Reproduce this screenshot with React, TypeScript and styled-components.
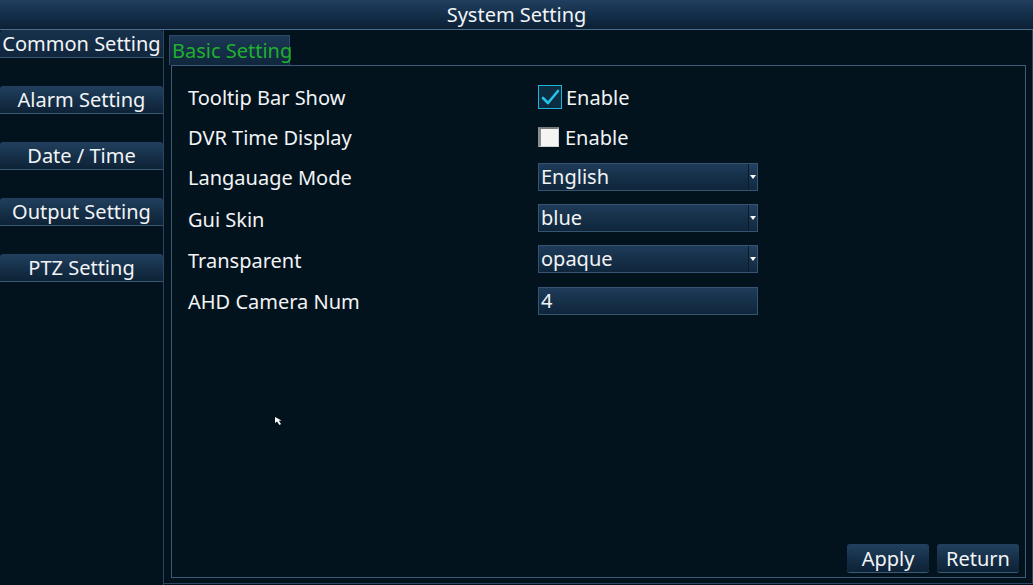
import React from "react";
import styled, { createGlobalStyle } from "styled-components";

const GlobalStyle = createGlobalStyle`
  html, body {
    margin: 0;
    padding: 0;
    background: #03131e;
  }
  body {
    font-family: "Noto Sans", "Open Sans", sans-serif;
    color: #f2f4f6;
  }
`;

const Screen = styled.div`
  position: relative;
  width: 1033px;
  height: 585px;
  display: flex;
  flex-direction: column;
  background: #03131e;
  overflow: hidden;
`;

const TitleBar = styled.div`
  height: 29px;
  border-bottom: 1px solid #4d6d8c;
  background: linear-gradient(#223f5f 0%, #15304c 45%, #0c2035 100%);
  display: flex;
  align-items: center;
  justify-content: center;
  font-size: 20px;
  line-height: 29px;
`;

const Body = styled.div`
  flex: 1;
  display: flex;
  min-height: 0;
`;

const Sidebar = styled.div`
  width: 163px;
  display: flex;
  flex-direction: column;
  gap: 28px;
  border-right: 1px solid #2b4760;
`;

const NavButton = styled.div<{ $active?: boolean }>`
  height: 27px;
  border-bottom: 1px solid #375773;
  background: ${p =>
    p.$active
      ? "linear-gradient(#17314c 0%, #10263d 100%)"
      : "linear-gradient(#21405f 0%, #163049 50%, #0d2236 100%)"};
  border-radius: 3px 3px 0 0;
  display: flex;
  align-items: center;
  justify-content: center;
  font-size: 20px;
  white-space: nowrap;
`;

const Main = styled.div`
  flex: 1;
  display: flex;
  flex-direction: column;
  padding: 5px 6px 5px 5px;
  border-right: 1px solid #2b4760;
  border-bottom: 1px solid #2b4760;
  margin-bottom: 1px;
`;

const TabRow = styled.div`
  display: flex;
  height: 30px;
`;

const Tab = styled.div`
  width: 121px;
  height: 30px;
  box-sizing: border-box;
  border: 1px solid #2d4a66;
  border-bottom: none;
  background: linear-gradient(#1c3855 0%, #0f263c 100%);
  color: #1fb02c;
  font-size: 20px;
  line-height: 30px;
  padding-left: 2px;
  white-space: nowrap;
`;

const Panel = styled.div`
  flex: 1;
  margin-left: 2px;
  border: 1px solid #3c5b78;
  display: flex;
  flex-direction: column;
  padding: 18px 0 4px 16px;
`;

const Rows = styled.div`
  display: flex;
  flex-direction: column;
`;

const Row = styled.div<{ $h: number; $field?: boolean }>`
  display: flex;
  align-items: ${p => (p.$field ? "flex-end" : "center")};
  height: ${p => p.$h}px;
`;

const Label = styled.div<{ $field?: boolean }>`
  width: 350px;
  font-size: 20px;
  white-space: nowrap;
  ${p => (p.$field ? "align-self: center; margin-top: 15px;" : "")}
`;

const CheckWrap = styled.div`
  display: flex;
  align-items: center;
  gap: 4px;
  font-size: 20px;
`;

const CheckOn = styled.div`
  width: 22px;
  height: 22px;
  border: 1px solid #1fb5d8;
  background: #0c2c42;
  display: flex;
  align-items: center;
  justify-content: center;
`;

const CheckOff = styled.div`
  width: 17px;
  height: 17px;
  margin-right: 2px;
  background: #f4f4f2;
  border-top: 2px solid #7a7a7a;
  border-left: 3px solid #8c8c8c;
  border-right: 1px solid #cfcfcf;
  border-bottom: 1px solid #cfcfcf;
`;

const Field = styled.div`
  position: relative;
  width: 220px;
  height: 28px;
  box-sizing: border-box;
  border: 1px solid #34546f;
  background: linear-gradient(#1e3b5a 0%, #163049 50%, #0f263c 100%);
  font-size: 20px;
  line-height: 26px;
  padding-left: 2px;
  display: flex;
  align-items: center;
`;

const Arrow = styled.div`
  position: absolute;
  right: 0;
  top: 0;
  bottom: 0;
  width: 8px;
  border-left: 1px solid #0a1a28;
  background: linear-gradient(#23405f, #11293f);
  display: flex;
  align-items: center;
  justify-content: center;
  &::after {
    content: "";
    width: 0;
    height: 0;
    border-left: 3px solid transparent;
    border-right: 3px solid transparent;
    border-top: 4px solid #ffffff;
  }
`;

const Footer = styled.div`
  margin-top: auto;
  display: flex;
  justify-content: flex-end;
  gap: 8px;
  padding-right: 6px;
`;

const Button = styled.div`
  width: 82px;
  height: 29px;
  box-sizing: border-box;
  border-radius: 3px;
  border-bottom: 1px solid #3a5a78;
  background: linear-gradient(#22415f 0%, #163049 50%, #0d2236 100%);
  display: flex;
  align-items: center;
  justify-content: center;
  font-size: 20px;
`;

const Cursor = styled.svg`
  position: absolute;
  left: 274px;
  top: 416px;
`;

const nav = ["Common Setting", "Alarm Setting", "Date / Time", "Output Setting", "PTZ Setting"];

const Check = () => (
  <CheckOn>
    <svg width="19" height="17" viewBox="0 0 19 17">
      <path d="M2 9 L7 14 L17 2" fill="none" stroke="#25c3e6" strokeWidth="2.6" strokeLinecap="round" strokeLinejoin="round" />
    </svg>
  </CheckOn>
);

export default function App() {
  return (
    <>
      <GlobalStyle />
      <Screen>
        <TitleBar>System Setting</TitleBar>
        <Body>
          <Sidebar>
            {nav.map((n, i) => (
              <NavButton key={n} $active={i === 0}>
                {n}
              </NavButton>
            ))}
          </Sidebar>
          <Main>
            <TabRow>
              <Tab>Basic Setting</Tab>
            </TabRow>
            <Panel>
              <Rows>
                <Row $h={26}>
                  <Label>Tooltip Bar Show</Label>
                  <CheckWrap>
                    <Check />
                    Enable
                  </CheckWrap>
                </Row>
                <Row $h={54}>
                  <Label>DVR Time Display</Label>
                  <CheckWrap>
                    <CheckOff />
                    Enable
                  </CheckWrap>
                </Row>
                <Row $h={27} $field>
                  <Label>Langauage Mode</Label>
                  <Field>
                    English
                    <Arrow />
                  </Field>
                </Row>
                <Row $h={41} $field>
                  <Label $field>Gui Skin</Label>
                  <Field>
                    blue
                    <Arrow />
                  </Field>
                </Row>
                <Row $h={41} $field>
                  <Label $field>Transparent</Label>
                  <Field>
                    opaque
                    <Arrow />
                  </Field>
                </Row>
                <Row $h={42} $field>
                  <Label $field>AHD Camera Num</Label>
                  <Field>4</Field>
                </Row>
              </Rows>
              <Footer>
                <Button>Apply</Button>
                <Button>Return</Button>
              </Footer>
            </Panel>
          </Main>
        </Body>
        <Cursor width="10" height="10" viewBox="0 0 10 10">
          <path d="M1 1 L1 7 L3 5.5 L5.5 9 L7 8 L4.8 4.8 L7.5 4.5 Z" fill="#ffffff" />
        </Cursor>
      </Screen>
    </>
  );
}
